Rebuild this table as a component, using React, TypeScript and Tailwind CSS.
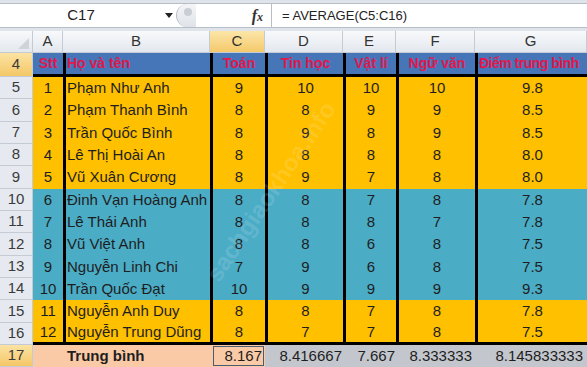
import React from 'react';

const FONT = { fontFamily: '"Liberation Sans", Arial, sans-serif' };

type Band = 'y' | 'b';

const rows: [number, string, number, number, number, number, string, Band][] = [
  [1, 'Phạm Như Anh', 9, 10, 10, 10, '9.8', 'y'],
  [2, 'Phạm Thanh Bình', 8, 8, 9, 9, '8.5', 'y'],
  [3, 'Trần Quốc Bình', 8, 9, 8, 9, '8.5', 'y'],
  [4, 'Lê Thị Hoài An', 8, 8, 8, 8, '8.0', 'y'],
  [5, 'Vũ Xuân Cương', 8, 9, 7, 8, '8.0', 'y'],
  [6, 'Đinh Vạn Hoàng Anh', 8, 8, 7, 8, '7.8', 'b'],
  [7, 'Lê Thái Anh', 8, 8, 8, 7, '7.8', 'b'],
  [8, 'Vũ Việt Anh', 8, 8, 6, 8, '7.5', 'b'],
  [9, 'Nguyễn Linh Chi', 7, 9, 6, 8, '7.5', 'b'],
  [10, 'Trần Quốc Đạt', 10, 9, 9, 9, '9.3', 'b'],
  [11, 'Nguyễn Anh Duy', 8, 8, 7, 8, '7.8', 'y'],
  [12, 'Nguyễn Trung Dũng', 8, 7, 7, 8, '7.5', 'y'],
];

function RowHead({ n, active }: { n: number; active?: boolean }) {
  return (
    <div
      className={`flex items-center justify-center border-b border-r border-[#c5cbd4] text-[15px] text-[#3a3a3a] ${
        active ? 'bg-gradient-to-b from-[#fbe3a2] to-[#f4c767]' : 'bg-[#e6eaf0]'
      }`}
    >
      {n}
    </div>
  );
}

function ColHead({ label, active }: { label: string; active?: boolean }) {
  return (
    <div
      className={`flex items-center justify-center border-b border-r border-[#c5cbd4] text-[15px] text-[#333] ${
        active ? 'bg-gradient-to-b from-[#fbe6a8] to-[#f5c96a]' : 'bg-gradient-to-b from-[#f8f9fb] to-[#e3e8ee]'
      }`}
    >
      {label}
    </div>
  );
}

export default function App() {
  return (
    <div className="relative w-[587px] h-[367px] overflow-hidden bg-white text-[#1e1e1e]" style={FONT}>
      {/* Formula bar */}
      <div className="h-[31px] bg-[#dfe4ea] pt-[3px] pb-[3px]">
        <div className="flex h-[25px] items-center bg-white border-y border-[#b7bec8]">
          <div className="w-[162px] text-center text-[15px] text-[#222]">C17</div>
          <div className="w-[14px] flex justify-center">
            <svg width="8" height="5" viewBox="0 0 8 5">
              <polygon points="0,0 8,0 4,5" fill="#222" />
            </svg>
          </div>
          <div className="h-full w-[20px] rounded-l-full border-l border-[#b7bec8] bg-gradient-to-b from-[#f4f5f7] to-[#dfe3e8] flex items-start pt-[4px] pl-[7px]">
            <div className="w-[8px] h-[8px] rounded-full bg-[#c9ced5]" />
          </div>
          <div className="flex-1 h-full flex items-center justify-end pr-[8px]">
            <span
              className="text-[16px] italic font-bold text-[#333]"
              style={{ fontFamily: '"Liberation Serif", serif' }}
            >
              f<span className="text-[12px]">x</span>
            </span>
          </div>
          <div className="h-full w-[316px] border-l border-[#b7bec8] pl-[10px] flex items-center text-[13px] text-[#222]">
            = AVERAGE(C5:C16)
          </div>
        </div>
      </div>

      {/* Sheet grid */}
      <div className="grid grid-cols-[33px_30px_147px_55px_78px_53px_79px_112px] grid-rows-[22px_24px_repeat(12,22.333px)_22px]">
        {/* Column headers */}
        <div className="relative border-b border-r border-[#c5cbd4] bg-gradient-to-b from-[#f8f9fb] to-[#e3e8ee]">
          <svg className="absolute right-[3px] bottom-[3px]" width="11" height="11" viewBox="0 0 11 11">
            <polygon points="11,0 11,11 0,11" fill="#cfd4db" />
          </svg>
        </div>
        <ColHead label="A" />
        <ColHead label="B" />
        <ColHead label="C" active />
        <ColHead label="D" />
        <ColHead label="E" />
        <ColHead label="F" />
        <ColHead label="G" />

        {/* Row 4: table header */}
        <RowHead n={4} active />
        {[
          { t: 'Stt', c: 'justify-center' },
          { t: 'Họ và tên', c: 'justify-start pl-[1px] border-l-[3px] border-l-black' },
          { t: 'Toán', c: 'justify-center border-l-[3px] border-l-black' },
          { t: 'Tin học', c: 'justify-center border-l-[3px] border-l-black' },
          { t: 'Vật lí', c: 'justify-center border-l-[3px] border-l-black' },
          { t: 'Ngữ văn', c: 'justify-center border-l-[3px] border-l-black' },
          { t: 'Điểm trung bình', c: 'justify-start pl-[1px] border-l-[3px] border-l-black tracking-[-0.5px]' },
        ].map((h) => (
          <div
            key={h.t}
            className={`flex items-center overflow-hidden whitespace-nowrap bg-[#4675b8] border-b-[3px] border-b-black text-[14px] font-bold text-[#e2174c] ${h.c}`}
          >
            {h.t}
          </div>
        ))}

        {/* Data rows */}
        {rows.map(([stt, name, c, d, e, f, g, band], i) => {
          const bg = band === 'y' ? 'bg-[#ffc000]' : 'bg-[#4bacc6]';
          const last = i === rows.length - 1 ? 'border-b-[3px] border-b-black' : '';
          const cell = `flex items-center text-[15px] ${bg} ${last}`;
          return (
            <React.Fragment key={stt}>
              <RowHead n={stt + 4} />
              <div className={`${cell} justify-center`}>{stt}</div>
              <div className={`${cell} border-l-[3px] border-l-black pl-[1px] whitespace-nowrap`}>{name}</div>
              <div className={`${cell} justify-center border-l-[3px] border-l-black`}>{c}</div>
              <div className={`${cell} justify-center border-l-[3px] border-l-black`}>{d}</div>
              <div className={`${cell} justify-center border-l-[3px] border-l-black`}>{e}</div>
              <div className={`${cell} justify-center border-l-[3px] border-l-black`}>{f}</div>
              <div className={`${cell} justify-center border-l-[3px] border-l-black`}>{g}</div>
            </React.Fragment>
          );
        })}

        {/* Row 17: averages */}
        <RowHead n={17} active />
        <div className="bg-[#facaa6]" />
        <div className="flex items-center bg-[#facaa6] pl-[4px] text-[15px] font-bold">Trung bình</div>
        <div className="bg-[#facaa6] p-[1px] pl-[3px]">
          <div className="h-full flex items-center justify-end border border-[#4a5a70] pr-[1px] text-[15px]">8.167</div>
        </div>
        <div className="flex items-center justify-end bg-[#c3c6cd] pr-[1px] text-[15px]">8.416667</div>
        <div className="flex items-center justify-end bg-[#c3c6cd] pr-[1px] text-[15px]">7.667</div>
        <div className="flex items-center justify-end bg-[#c3c6cd] pr-[3px] text-[15px]">8.333333</div>
        <div className="flex items-center justify-end bg-[#c3c6cd] pr-[4px] text-[15px]">8.145833333</div>
      </div>

      {/* Watermark */}
      <div
        className="pointer-events-none absolute left-[168px] top-[178px] w-[200px] text-center text-[24px] font-bold text-white/15 whitespace-nowrap"
        style={{ transform: 'rotate(-56deg)' }}
      >
        sachgiaokhoa.info
      </div>
    </div>
  );
}
